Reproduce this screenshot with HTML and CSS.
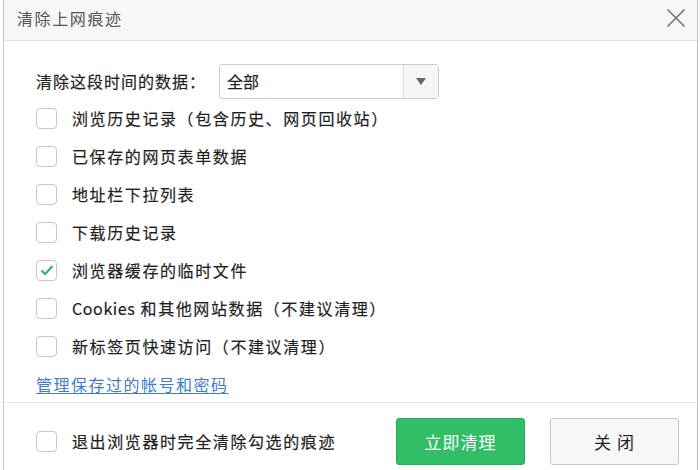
FILE: index.html
```html
<!DOCTYPE html>
<html lang="zh-CN">
<head>
<meta charset="utf-8">
<title>清除上网痕迹</title>
<link rel="stylesheet" href="styles.css">
</head>
<body>
<div class="dialog">
  <div class="titlebar">
    <span class="title">清除上网痕迹</span>
    <svg class="close" width="20" height="20" viewBox="0 0 20 20"><path d="M1.5 1.5 L18.5 18.5 M18.5 1.5 L1.5 18.5" stroke="#6f6f6f" stroke-width="1.5" fill="none"/></svg>
  </div>
  <div class="content">
    <div class="range-row">
      <span class="range-label">清除这段时间的数据：</span>
      <div class="select">
        <span class="select-value">全部</span>
        <span class="select-arrow"><svg width="10" height="7" viewBox="0 0 10 7"><path d="M0 0 H10 L5 7 Z" fill="#666"/></svg></span>
      </div>
    </div>
    <div class="opt"><span class="box"></span><span class="txt">浏览历史记录（包含历史、网页回收站）</span></div>
    <div class="opt"><span class="box"></span><span class="txt">已保存的网页表单数据</span></div>
    <div class="opt"><span class="box"></span><span class="txt">地址栏下拉列表</span></div>
    <div class="opt"><span class="box"></span><span class="txt">下载历史记录</span></div>
    <div class="opt"><span class="box checked"><svg width="14" height="12" viewBox="0 0 14 12"><path d="M1.5 6.5 L5.2 10 L12.5 2" stroke="#2fb562" stroke-width="2.2" fill="none"/></svg></span><span class="txt">浏览器缓存的临时文件</span></div>
    <div class="opt"><span class="box"></span><span class="txt"><span class="latin">Cookies</span> 和其他网站数据（不建议清理）</span></div>
    <div class="opt"><span class="box"></span><span class="txt">新标签页快速访问（不建议清理）</span></div>
    <div class="link-row"><a class="link" href="#">管理保存过的帐号和密码</a></div>
  </div>
  <div class="footer">
    <div class="opt foot-opt"><span class="box"></span><span class="txt">退出浏览器时完全清除勾选的痕迹</span></div>
    <button class="btn btn-primary">立即清理</button>
    <button class="btn btn-default">关 闭</button>
  </div>
</div>
</body>
</html>
```

FILE: styles.css
```css
html, body {
  margin: 0;
  padding: 0;
  background: #ffffff;
}
body {
  font-family: "Noto Sans CJK SC", "Microsoft YaHei", sans-serif;
  color: #1f1f1f;
}
.dialog {
  margin-left: 3px;
  width: 693px;
  height: 470px;
  border-left: 1px solid #c9c9c9;
  border-right: 1px solid #bfbfbf;
  box-sizing: content-box;
  background: #ffffff;
  display: flex;
  flex-direction: column;
}
.titlebar {
  height: 40px;
  background: #f7f7f7;
  border-bottom: 1px solid #e1e1e1;
  display: flex;
  align-items: center;
  justify-content: space-between;
  padding: 0 11px 0 13px;
}
.title {
  font-size: 16px;
  letter-spacing: 1.6px;
  color: #555555;
  line-height: 20px;
  margin-top: -4px;
}
.close {
  margin-top: -5px;
}
.content {
  padding: 22px 0 0 32px;
  border-bottom: 1px solid #e6e6e6;
}
.range-row {
  display: flex;
  align-items: center;
  height: 36px;
}
.range-label {
  font-size: 16px;
  letter-spacing: 1px;
  line-height: 20px;
  width: 183px;
  -webkit-text-stroke: 0.2px #1f1f1f;
}
.select {
  width: 218px;
  height: 33px;
  border: 1px solid #cccccc;
  border-radius: 3px;
  display: flex;
  align-items: stretch;
}
.select-value {
  flex: 1;
  font-size: 16px;
  line-height: 33px;
  padding-left: 7px;
  -webkit-text-stroke: 0.2px #1f1f1f;
}
.select-arrow {
  width: 34px;
  border-left: 1px solid #dddddd;
  background: #f6f6f6;
  display: flex;
  align-items: center;
  justify-content: center;
}
.opt {
  display: flex;
  align-items: center;
  height: 38px;
}
.box {
  width: 19px;
  height: 19px;
  border: 1px solid #c6c6c6;
  border-radius: 4px;
  background: #ffffff;
  display: flex;
  align-items: center;
  justify-content: center;
  flex: none;
}
.txt {
  margin-left: 15px;
  font-size: 16px;
  letter-spacing: 1.6px;
  line-height: 20px;
  -webkit-text-stroke: 0.2px #1f1f1f;
}
.latin {
  letter-spacing: 0.6px;
}
.link-row {
  height: 37px;
  display: flex;
  align-items: center;
}
.link {
  font-size: 16px;
  letter-spacing: 1.5px;
  line-height: 20px;
  color: #3f7ccc;
  text-decoration: underline;
  text-underline-offset: 2px;
}
.footer {
  flex: 1;
  display: flex;
  align-items: center;
  padding: 9px 0 0 32px;
}
.foot-opt {
  flex: 1;
}
.btn {
  width: 129px;
  height: 47px;
  border-radius: 3px;
  font-family: "Noto Sans CJK SC", "Microsoft YaHei", sans-serif;
  font-size: 17px;
  padding: 0;
  margin: 0;
}
.btn-primary {
  background: #31be66;
  border: 1px solid #27a957;
  color: #ffffff;
  letter-spacing: 1px;
}
.btn-default {
  background: #f7f7f7;
  border: 1px solid #c8c8c8;
  color: #222222;
  margin-left: 25px;
  margin-right: 18px;
  letter-spacing: 1px;
}
```
